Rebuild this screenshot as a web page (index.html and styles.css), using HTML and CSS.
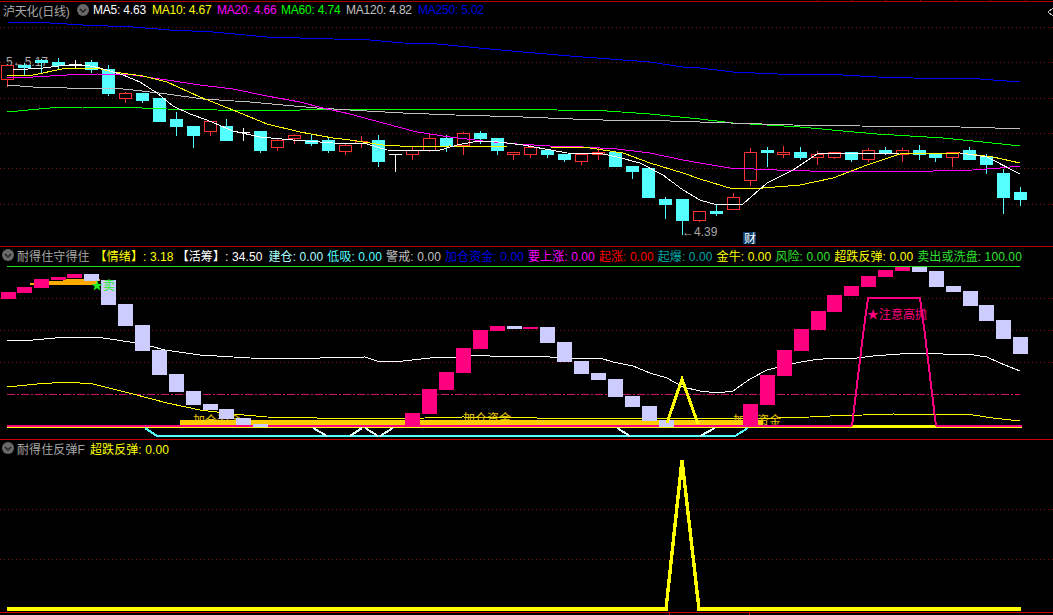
FILE: index.html
```html
<!DOCTYPE html>
<html lang="zh-CN">
<head>
  <meta charset="UTF-8">
  <title>泸天化(日线)</title>
  <link rel="stylesheet" href="styles.css">
</head>
<body>
  <div class="chart">

    <section class="pane pane-main">
      <svg id="main-plot" class="plot" viewBox="0 0 1053 246" width="1053" height="246"></svg>
      <div class="legend legend-main">
        <span class="title">泸天化(日线)</span>
        <svg class="toggle" viewBox="0 0 12 12" width="12" height="12"><circle cx="6" cy="6" r="6"/><path d="M3 5l3 3 3-3"/></svg>
        <span class="c-white">MA5: 4.63</span>
        <span class="c-yellow">MA10: 4.67</span>
        <span class="c-magenta">MA20: 4.66</span>
        <span class="c-green">MA60: 4.74</span>
        <span class="c-gray">MA120: 4.82</span>
        <span class="c-blue">MA250: 5.02</span>
      </div>
    </section>

    <section class="pane pane-mood">
      <svg id="mood-plot" class="plot" viewBox="0 246 1053 193" width="1053" height="193"></svg>
      <div class="legend">
        <svg class="toggle" viewBox="0 0 12 12" width="12" height="12"><circle cx="6" cy="6" r="6"/><path d="M3 5l3 3 3-3"/></svg>
        <span class="title title-mood">耐得住守得住</span>
        <span class="c-yellow mood-first">【情绪】: 3.18</span>
        <span class="c-white mood-second">【活筹】: 34.50</span>
        <span class="c-pale">建仓: 0.00</span>
        <span class="c-cyan">低吸: 0.00</span>
        <span class="c-gray">警戒: 0.00</span>
        <span class="c-blue">加仓资金: 0.00</span>
        <span class="c-magenta">要上涨: 0.00</span>
        <span class="c-red">起涨: 0.00</span>
        <span class="c-teal">起爆: 0.00</span>
        <span class="c-yellow">金牛: 0.00</span>
        <span class="c-lime">风险: 0.00</span>
        <span class="c-yellow">超跌反弹: 0.00</span>
        <span class="c-lime">卖出或洗盘: 100.00</span>
      </div>
    </section>

    <section class="pane pane-rebound">
      <svg id="rebound-plot" class="plot" viewBox="0 439 1053 176" width="1053" height="176"></svg>
      <div class="legend">
        <svg class="toggle" viewBox="0 0 12 12" width="12" height="12"><circle cx="6" cy="6" r="6"/><path d="M3 5l3 3 3-3"/></svg>
        <span class="title title-rebound">耐得住反弹F</span>
        <span class="c-yellow">超跌反弹: 0.00</span>
      </div>
    </section>

  </div>
  <script src="chart.js"></script>
</body>
</html>
```

FILE: styles.css
```css
html, body {
  margin: 0;
  padding: 0;
  background-color: #000;
  overflow: hidden;
}
.chart {
  display: flex;
  flex-direction: column;
  width: 1053px;
  height: 615px;
  font-family: "Liberation Sans", "Noto Sans CJK SC", sans-serif;
  font-size: 12px;
}
.pane {
  position: relative;
  flex: none;
}
.pane-main {
  height: 246px;
}
.pane-mood {
  height: 193px;
}
.pane-rebound {
  height: 176px;
}
.plot {
  position: absolute;
  top: 0;
  left: 0;
  display: block;
}
.legend {
  position: relative;
  display: flex;
  align-items: center;
  gap: 4px;
  height: 18px;
  padding-left: 2px;
  white-space: nowrap;
}
.legend-main {
  display: grid;
  grid-template-columns: 74px 16px 59px 65px 64px 65px 72px auto;
  gap: 0;
  height: 20px;
  padding-left: 3px;
}
.legend span {
  letter-spacing: 0.1px;
}
.legend-main span {
  letter-spacing: -0.2px;
}
.title {
  color: #a8a8a8;
}
.title-mood {
  margin: 0 1px 0 -1px;
}
.mood-first {
  margin-right: -1px;
}
.mood-second {
  margin-right: 2px;
}
.title-rebound {
  margin: 0 1px 0 -1px;
}
.toggle {
  flex: none;
}
.toggle circle {
  fill: #686868;
}
.toggle path {
  fill: none;
  stroke: #222;
  stroke-width: 1.5;
}

.c-white { color: #fff; }
.c-yellow { color: #ff0; }
.c-magenta { color: #f0f; }
.c-green { color: #0f0; }
.c-lime { color: #2fe02f; }
.c-gray { color: #c0c0c0; }
.c-blue { color: #0000e6; }
.c-pale { color: #aaffff; }
.c-cyan { color: #54ffff; }
.c-red { color: #f00; }
.c-teal { color: #00aaaa; }

/* svg parts */
.plot polyline, .plot line, .plot rect {
  shape-rendering: crispEdges;
}
.plot polyline {
  fill: none;
  stroke-width: 1;
}
.plot text {
  font-family: "Liberation Sans", "Noto Sans CJK SC", sans-serif;
  font-size: 12px;
}
.grid {
  stroke: #801010;
  stroke-width: 1;
  stroke-dasharray: 1 3;
}
.frame {
  stroke: #a80000;
  stroke-width: 1;
}
.frame-bright {
  stroke: #cc0000;
  stroke-width: 1;
}
.middle {
  stroke: #d0106c;
  stroke-width: 1;
  stroke-dasharray: 8 2 2 2;
}
.s-white { stroke: #fff; }
.s-yellow { stroke: #ff0; }
.s-magenta { stroke: #f0f; }
.s-green { stroke: #0f0; }
.s-gray { stroke: #c0c0c0; }
.s-blue { stroke: #0000ff; }
.s-cyan { stroke: #54ffff; }
.s-pale { stroke: #d8ffff; }
.s-pink { stroke: #ff0080; }
.s-limeline { stroke: #1fe01f; }

.plot .wide { stroke-width: 2; }
.plot .heavy { stroke-width: 3; }
.plot .peak { stroke-width: 3.4; }

.candle-c { fill: #54ffff; stroke: #54ffff; }
.candle-w { fill: #fff; stroke: #fff; }
.candle-r { fill: #000; stroke: #ff3232; }
.wick-c { stroke: #54ffff; }
.wick-w { stroke: #fff; }
.wick-r { stroke: #ff3232; }
.bar-pink { fill: #ff0080; }
.bar-lav { fill: #ccccff; }
.bar-gold { fill: #ffcc00; }
.bar-orange { fill: #ffaa00; }
.bar-yellow { fill: #ff0; }

.price-label { fill: #a8a8a8; }
.flag-bg { fill: #0a3a66; }
.flag-text { fill: #fff; }
.sell-mark { fill: #22ee22; }
.high-mark { fill: #ff0080; }
.cash-mark { fill: #e8c800; }
```

FILE: chart.js
```js
const NS = 'http://www.w3.org/2000/svg';

function add(svg, tag, attrs, text) {
  const el = document.createElementNS(NS, tag);
  for (const k in attrs) el.setAttribute(k, attrs[k]);
  if (text) el.textContent = text;
  svg.appendChild(el);
  return el;
}

function line(svg, pts, cls) {
  add(svg, 'polyline', { points: pts.map(p => p.join(',')).join(' '), class: cls });
}

function hline(svg, y, cls, x1 = 0, x2 = 1053) {
  add(svg, 'line', { x1: x1, y1: y + 0.5, x2: x2, y2: y + 0.5, class: cls });
}

// ---------- main pane ----------
// [kind, bodyTop, bodyBottom, wickTop, wickBottom]
const candles = [
  ['r', 65, 79, 65, 86], ['c', 65, 67, 63, 75], ['c', 60, 62, 59, 72], ['c', 62, 65, 58, 68],
  ['w', 64, 64, 60, 68], ['c', 62, 69, 60, 72], ['c', 69, 93, 65, 95], ['r', 93, 98, 92, 102],
  ['c', 93, 100, 93, 102], ['c', 98, 121, 98, 121], ['c', 119, 126, 112, 135], ['c', 126, 135, 126, 147],
  ['r', 121, 131, 121, 135], ['c', 126, 140, 119, 140], ['w', 132, 132, 128, 140], ['c', 131, 150, 131, 152],
  ['r', 140, 147, 139, 150], ['r', 135, 138, 134, 143], ['c', 140, 143, 135, 145], ['c', 140, 150, 138, 152],
  ['r', 145, 151, 143, 154], ['r', 141, 143, 136, 147], ['c', 140, 161, 135, 166], ['w', 154, 154, 154, 171],
  ['r', 150, 154, 146, 159], ['r', 138, 150, 133, 151], ['c', 138, 145, 135, 151], ['r', 133, 145, 132, 154],
  ['c', 133, 138, 131, 143], ['c', 138, 150, 138, 154], ['r', 152, 154, 152, 159], ['r', 147, 154, 144, 157],
  ['c', 150, 154, 150, 157], ['c', 154, 159, 154, 161], ['r', 154, 161, 154, 164], ['r', 152, 154, 148, 159],
  ['c', 152, 166, 152, 166], ['c', 166, 171, 166, 178], ['c', 168, 197, 168, 197], ['c', 199, 204, 197, 218],
  ['c', 199, 220, 199, 234], ['r', 211, 220, 211, 221], ['c', 211, 213, 205, 215], ['r', 197, 209, 193, 209],
  ['r', 152, 180, 148, 185], ['c', 150, 152, 147, 166], ['r', 152, 154, 146, 157], ['c', 152, 157, 147, 159],
  ['r', 154, 157, 151, 164], ['r', 152, 157, 152, 158], ['c', 152, 159, 152, 161], ['r', 150, 159, 148, 161],
  ['c', 150, 152, 147, 154], ['r', 150, 154, 148, 161], ['c', 150, 154, 145, 159], ['c', 153, 157, 153, 161],
  ['r', 152, 157, 152, 166], ['c', 150, 159, 147, 159], ['c', 156, 164, 154, 173], ['c', 173, 197, 169, 213],
  ['c', 192, 199, 187, 205]
];

const maLines = {
  's-blue': [[7,22],[50,23],[83,25],[133,27],[170,30],[213,32],[267,37],[333,39],[370,40],[403,43],[437,44],[490,49],[523,52],[570,56],[610,59],[650,62],[683,67],[700,68],[733,72],[777,74],[843,75],[877,77],[913,78],[980,79],[1020,82]],
  's-green': [[7,112],[50,108],[83,107],[117,107],[167,109],[267,111],[333,109],[507,109],[557,110],[607,111],[650,114],[700,119],[733,123],[767,125],[800,127],[843,131],[877,134],[910,136],[943,138],[983,142],[1020,146]],
  's-gray': [[7,85],[33,87],[67,88],[113,88],[133,90],[167,94],[203,99],[250,102],[283,105],[317,108],[350,110],[367,111],[403,113],[455,115],[490,116],[523,117],[573,119],[603,120],[640,120],[700,122],[793,125],[860,126],[960,127],[995,128],[1020,128]],
  's-magenta': [[7,78],[33,77],[67,75],[97,74],[133,75],[167,80],[200,85],[233,89],[267,96],[300,102],[323,108],[350,114],[383,123],[417,132],[450,137],[483,141],[517,144],[550,146],[583,147],[617,149],[650,153],[683,160],[700,163],[730,168],[777,170],[810,171],[933,171],[973,170],[1000,168],[1020,166]],
  's-yellow': [[7,75],[33,75],[67,68],[97,68],[113,72],[143,76],[167,82],[200,97],[233,110],[267,124],[300,132],[333,138],[350,140],[383,145],[417,147],[450,146],[507,147],[550,147],[590,148],[623,153],[650,163],[683,173],[700,179],[733,189],[763,188],[800,185],[833,178],[867,165],[900,154],[960,153],[993,157],[1020,163]],
  's-white': [[13,70],[43,68],[67,65],[90,66],[100,68],[123,75],[140,82],[157,93],[173,106],[190,114],[207,120],[233,131],[260,137],[293,140],[333,143],[367,144],[387,150],[437,151],[457,145],[473,142],[490,141],[523,145],[567,153],[603,154],[617,157],[640,163],[663,175],[683,190],[700,200],[717,205],[743,204],[767,183],[793,170],[817,154],[900,153],[960,153],[987,157],[1020,174]]
};

function drawMain() {
  const svg = document.getElementById('main-plot');
  [27, 62, 98, 133, 168, 204].forEach(y => hline(svg, y, 'grid'));
  hline(svg, 1, 'frame');
  [817, 851, 885, 920, 955, 990, 1025].forEach(x => {
    add(svg, 'line', { x1: x + 0.5, y1: 0, x2: x + 0.5, y2: 1, class: 'frame' });
  });
  line(svg, [[1053, 8], [1048, 12], [1053, 16]], 's-gray');

  add(svg, 'text', { x: 6, y: 66, class: 'price-label' }, '5←5.17');

  candles.forEach((c, i) => {
    const x = Math.round(7 + 16.88 * i);
    const [kind, top, bottom, wickTop, wickBottom] = c;
    add(svg, 'line', { x1: x + 0.5, y1: wickTop, x2: x + 0.5, y2: wickBottom + 1, class: 'wick-' + kind });
    if (top === bottom) {
      add(svg, 'line', { x1: x - 6, y1: top + 0.5, x2: x + 7, y2: top + 0.5, class: 'wick-' + kind });
    } else {
      add(svg, 'rect', { x: x - 5.5, y: top + 0.5, width: 12, height: bottom - top, class: 'candle-' + kind });
    }
  });

  for (const cls in maLines) line(svg, maLines[cls], cls);

  add(svg, 'text', { x: 682, y: 236, class: 'price-label' }, '←4.39');
  add(svg, 'rect', { x: 743, y: 232, width: 13, height: 12, class: 'flag-bg' });
  add(svg, 'text', { x: 744, y: 243, class: 'flag-text' }, '财');
}

// ---------- mood pane ----------
// [left, top, bottom, kind]
const moodBars = [
  [1, 292, 299, 'pink'], [17, 287, 293, 'pink'], [34, 279, 288, 'pink'], [51, 277, 280, 'pink'], [67, 274, 278, 'pink'],
  [84, 274, 281, 'lav'], [101, 280, 305, 'lav'], [118, 304, 326, 'lav'], [135, 325, 351, 'lav'], [152, 350, 375, 'lav'],
  [169, 374, 392, 'lav'], [186, 391, 405, 'lav'], [203, 404, 410, 'lav'], [219, 409, 419, 'lav'], [236, 418, 425, 'lav'],
  [253, 424, 427, 'lav'],
  [405, 413, 426, 'pink'], [422, 389, 414, 'pink'], [439, 372, 390, 'pink'], [456, 348, 373, 'pink'], [473, 330, 349, 'pink'],
  [490, 326, 331, 'pink'], [507, 326, 329, 'lav'], [523, 327, 329, 'pink'], [540, 327, 343, 'lav'], [557, 342, 362, 'lav'],
  [574, 361, 374, 'lav'], [591, 373, 380, 'lav'], [608, 379, 397, 'lav'], [625, 396, 407, 'lav'], [642, 406, 421, 'lav'],
  [659, 420, 427, 'lav'],
  [743, 404, 426, 'pink'], [760, 375, 405, 'pink'], [777, 350, 376, 'pink'], [794, 329, 351, 'pink'], [811, 311, 330, 'pink'],
  [827, 295, 312, 'pink'], [844, 286, 296, 'pink'], [861, 276, 287, 'pink'], [878, 270, 277, 'pink'], [895, 267, 271, 'pink'],
  [912, 267, 272, 'lav'], [929, 271, 287, 'lav'], [946, 286, 292, 'lav'], [963, 291, 306, 'lav'], [979, 305, 321, 'lav'],
  [996, 320, 339, 'lav'], [1013, 337, 354, 'lav']
];

const moodWhite = [[7,340],[33,340],[66,337],[95,337],[110,339],[130,342],[150,346],[165,350],[200,355],[250,358],[290,359],[320,358],[365,357],[377,361],[403,361],[430,358],[457,357],[472,355],[490,356],[537,356],[550,357],[570,359],[600,358],[613,362],[633,366],[650,373],[667,378],[683,387],[700,391],[717,393],[733,391],[750,379],[767,370],[790,364],[813,360],[833,358],[857,358],[873,356],[900,354],[917,353],[943,354],[967,354],[987,357],[1000,363],[1020,371]];
const moodYellow = [[7,387],[37,384],[67,382],[93,384],[133,394],[167,403],[200,410],[233,414],[267,417],[317,418],[350,419],[425,418],[463,417],[537,418],[557,419],[777,418],[810,417],[830,416],[863,415],[893,414],[927,415],[947,414],[973,415],[993,418],[1020,421]];

function bar(svg, x, y, w, h, cls) {
  add(svg, 'rect', { x: x, y: y, width: w, height: h, class: cls });
}

function drawMood() {
  const svg = document.getElementById('mood-plot');
  hline(svg, 246, 'frame');
  hline(svg, 266, 's-limeline', 7, 1020);
  [298, 330, 362].forEach(y => hline(svg, y, 'grid'));
  hline(svg, 394, 'middle', 7, 1020);

  line(svg, moodWhite, 's-white');
  line(svg, moodYellow, 's-yellow');

  // labels sit behind the gold bar, only their top half shows
  add(svg, 'text', { x: 193, y: 425, class: 'cash-mark' }, '加仓资金');
  add(svg, 'text', { x: 463, y: 423, class: 'cash-mark' }, '加仓资金');
  add(svg, 'text', { x: 733, y: 425, class: 'cash-mark' }, '加仓资金');

  bar(svg, 30, 283, 20, 2, 'bar-orange');
  bar(svg, 49, 281, 48, 4, 'bar-orange');
  bar(svg, 63, 279, 37, 2, 'bar-orange');
  bar(svg, 180, 420, 583, 5, 'bar-gold');

  hline(svg, 427, 's-yellow', 7, 1022);
  hline(svg, 425.5, 's-pink wide', 7, 1022);
  bar(svg, 852, 425, 84, 3, 'bar-yellow');

  // flat part first, the short slants go over it
  line(svg, [[157,436],[735,436]], 's-cyan wide');
  line(svg, [[145,428],[157,436]], 's-cyan wide');
  line(svg, [[735,436],[748,428]], 's-cyan wide');
  [[[313,428],[327,436]], [[350,436],[362,428]], [[365,428],[378,436]], [[380,436],[393,428]], [[617,428],[630,436]], [[700,436],[715,428]]].forEach(seg => {
    line(svg, seg, 's-pale wide');
  });

  moodBars.forEach(b => {
    bar(svg, b[0], b[1], 15, b[2] - b[1], 'bar-' + b[3]);
  });

  line(svg, [[667,423],[682,379],[698,424]], 's-yellow heavy');
  line(svg, [[852,426],[863,335],[868,298],[920,298],[925,335],[936,426]], 's-pink wide');

  add(svg, 'text', { x: 91, y: 290, class: 'sell-mark' }, '★卖');
  add(svg, 'text', { x: 867, y: 319, class: 'high-mark' }, '★注意高抛');
}

// ---------- rebound pane ----------
function drawRebound() {
  const svg = document.getElementById('rebound-plot');
  hline(svg, 439, 'frame-bright');
  [509, 559].forEach(y => hline(svg, y, 'grid'));
  line(svg, [[7,609],[666,609],[682,460],[699,609],[1021,609]], 's-yellow peak');
  hline(svg, 612, 'frame-bright');
  [669, 749].forEach(x => {
    add(svg, 'line', { x1: x + 0.5, y1: 613, x2: x + 0.5, y2: 615, class: 'frame-bright' });
  });
}

drawMain();
drawMood();
drawRebound();
```
